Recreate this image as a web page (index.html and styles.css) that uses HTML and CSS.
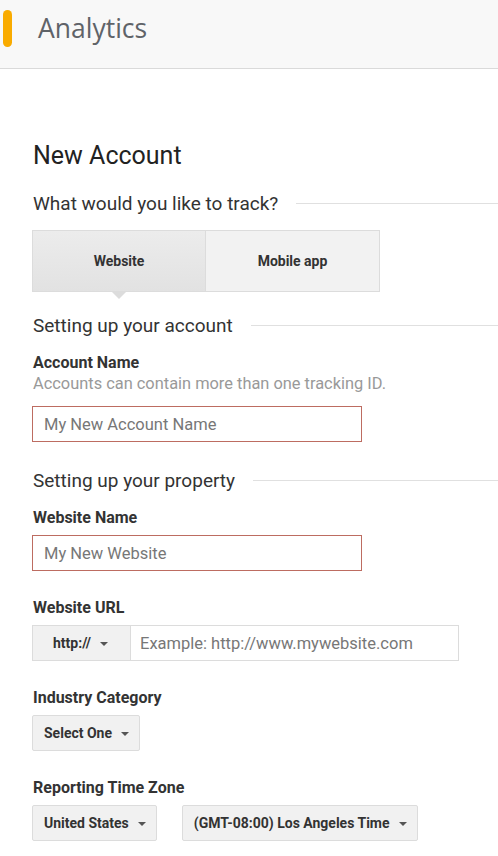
FILE: index.html
```html
<!DOCTYPE html>
<html>
<head>
<meta charset="utf-8">
<link rel="stylesheet" href="styles.css">
</head>
<body>
<header class="topbar">
  <span class="logo-bar"></span>
  <span class="brand">Analytics</span>
</header>
<main class="content">
  <h1 class="page-title">New Account</h1>

  <div class="section-head first"><span>What would you like to track?</span><i class="rule"></i></div>
  <div class="tabs">
    <div class="tab selected">Website</div>
    <div class="tab">Mobile app</div>
  </div>

  <div class="section-head account"><span>Setting up your account</span><i class="rule"></i></div>
  <div class="field">
    <div class="label">Account Name</div>
    <div class="hint">Accounts can contain more than one tracking ID.</div>
    <div class="text-input error">My New Account Name</div>
  </div>

  <div class="section-head property"><span>Setting up your property</span><i class="rule"></i></div>
  <div class="field">
    <div class="label">Website Name</div>
    <div class="text-input error">My New Website</div>
  </div>

  <div class="field">
    <div class="label">Website URL</div>
    <div class="url-group">
      <div class="select proto">http://<span class="caret"></span></div>
      <div class="url-input">Example: http://www.mywebsite.com</div>
    </div>
  </div>

  <div class="field">
    <div class="label">Industry Category</div>
    <div class="select-row">
      <div class="select">Select One<span class="caret"></span></div>
    </div>
  </div>

  <div class="field">
    <div class="label">Reporting Time Zone</div>
    <div class="select-row gap">
      <div class="select">United States<span class="caret"></span></div>
      <div class="select">(GMT-08:00) Los Angeles Time<span class="caret"></span></div>
    </div>
  </div>
</main>
</body>
</html>
```

FILE: styles.css
```css
* { box-sizing: border-box; }
html, body { margin: 0; padding: 0; background: #fff; }
body {
  font-family: Roboto, "Noto Sans", "Liberation Sans", sans-serif;
  color: #333;
  width: 498px;
  overflow: hidden;
}

.topbar {
  height: 69px;
  background: #f8f8f8;
  border-bottom: 1px solid #dadada;
  display: flex;
  align-items: center;
}
.logo-bar {
  width: 9px;
  height: 37px;
  margin-left: 3px;
  margin-top: -12px;
  background: #f9ab00;
  border-radius: 4.5px;
}
.brand {
  margin-left: 26px;
  margin-top: -12px;
  font-family: "Open Sans", Roboto, sans-serif;
  font-size: 26.5px;
  color: #5f6368;
}

.content { padding: 0 0 0 32px; }

.page-title {
  margin: 73px 0 0 1px;
  font-size: 25px;
  line-height: 28px;
  font-weight: 400;
  color: #222;
}

.section-head {
  display: flex;
  align-items: center;
  gap: 18px;
  font-size: 19px;
  line-height: 24px;
  color: #333;
  padding-left: 1px;
}
.section-head.first { margin-top: 22px; }
.section-head.account { margin-top: 22px; }
.section-head.property { margin-top: 27px; }
.section-head .rule {
  flex: 1;
  height: 1px;
  background: #e0e0e0;
  margin-top: -2px;
}

.tabs {
  display: flex;
  margin-top: 14px;
  width: 349px;
}
.tab {
  position: relative;
  width: 174px;
  height: 62px;
  display: flex;
  align-items: center;
  justify-content: center;
  font-size: 14px;
  font-weight: 700;
  color: #333;
  background: #f2f2f2;
  border: 1px solid #dcdcdc;
  border-left: none;
}
.tab.selected {
  border-left: 1px solid #dcdcdc;
  background: linear-gradient(#ececec, #e2e2e2);
}
.tab.selected::after {
  content: "";
  position: absolute;
  left: 50%;
  bottom: -8px;
  margin-left: -7px;
  border-left: 7px solid transparent;
  border-right: 7px solid transparent;
  border-top: 7px solid #dcdcdc;
}

.field { margin-top: 27px; }
.section-head + .field { margin-top: 15px; }

.label {
  font-size: 16px;
  line-height: 20px;
  font-weight: 700;
  color: #333;
  padding-left: 1px;
}
.hint {
  font-size: 16.4px;
  line-height: 20px;
  color: #999;
  margin-top: 1px;
  padding-left: 1px;
}
.hint + .text-input { margin-top: 12px; }

.text-input {
  margin-top: 7px;
  width: 330px;
  height: 36px;
  border: 1px solid #bd6c61;
  padding: 0 11px;
  display: flex;
  align-items: center;
  font-size: 16.5px;
  color: #777;
}

.url-group {
  margin-top: 7px;
  display: flex;
  width: 427px;
  height: 36px;
  border: 1px solid #dcdcdc;
}
.url-input {
  flex: 1;
  display: flex;
  align-items: center;
  padding-left: 9px;
  font-size: 16.5px;
  color: #777;
  background: #fff;
}

.select-row { display: flex; margin-top: 7px; }
.select-row.gap { gap: 25px; }

.select {
  height: 36px;
  display: flex;
  align-items: center;
  padding: 0 10px 0 11px;
  background: #f1f1f1;
  border: 1px solid #dcdcdc;
  border-radius: 2px;
  font-size: 14px;
  font-weight: 700;
  color: #333;
}
.select.proto {
  height: 100%;
  border: none;
  border-right: 1px solid #dcdcdc;
  border-radius: 0;
  width: 98px;
  padding-left: 20px;
}
.caret {
  display: inline-block;
  width: 0;
  height: 0;
  margin-left: 9px;
  margin-top: 2px;
  border-left: 4px solid transparent;
  border-right: 4px solid transparent;
  border-top: 4px solid #555;
}
```
